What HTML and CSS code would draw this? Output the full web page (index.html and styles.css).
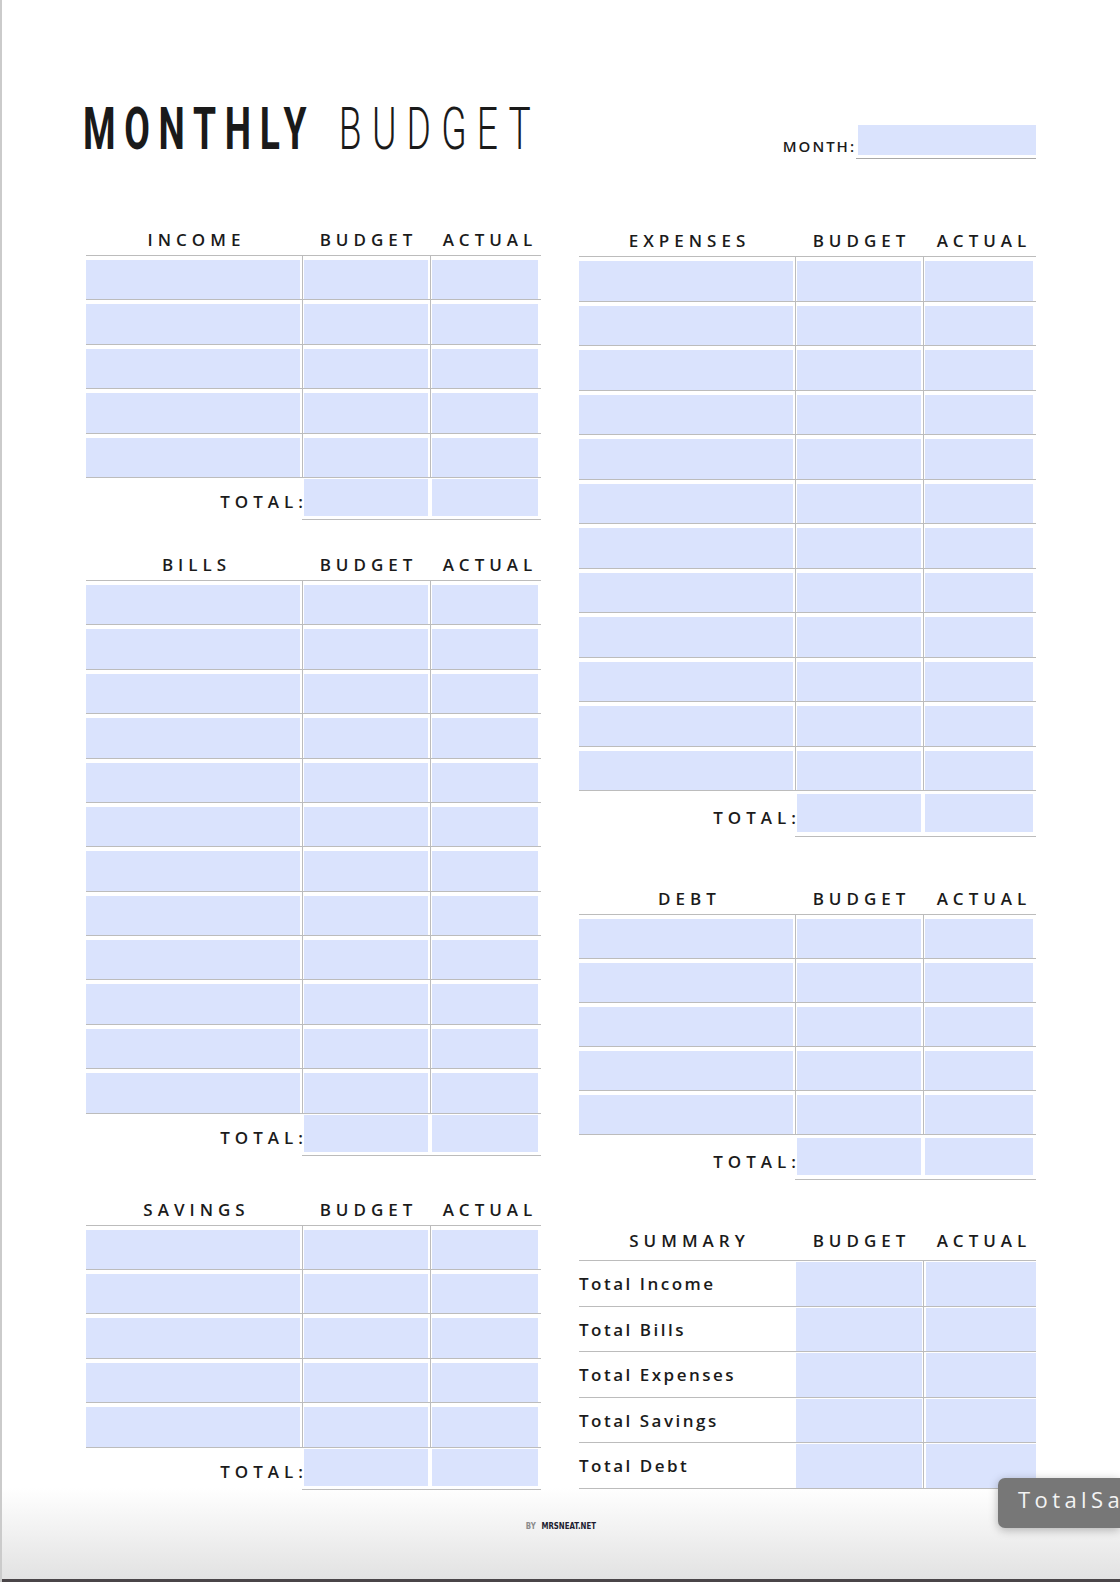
FILE: index.html
```html
<!DOCTYPE html>
<html lang="en">
<head>
<meta charset="utf-8">
<title>Monthly Budget</title>
<link rel="stylesheet" href="styles.css">
</head>
<body>
<div class="page">
  <header class="top">
    <h1 class="title"><span class="t-bold">MONTHLY</span> <span class="t-light">BUDGET</span></h1>
    <div class="month">
      <span class="month-label">MONTH:</span>
      <span class="month-field"><span class="month-fill"></span></span>
    </div>
  </header>

  <div class="columns">
    <div class="col col-left">
      <section class="sec">
        <div class="sec-head"><span>INCOME</span><span>BUDGET</span><span class="act">ACTUAL</span></div>
        <div class="row"><div class="c"><div class="fill"></div></div><div class="c"><div class="fill"></div></div><div class="c"><div class="fill"></div></div></div>
        <div class="row"><div class="c"><div class="fill"></div></div><div class="c"><div class="fill"></div></div><div class="c"><div class="fill"></div></div></div>
        <div class="row"><div class="c"><div class="fill"></div></div><div class="c"><div class="fill"></div></div><div class="c"><div class="fill"></div></div></div>
        <div class="row"><div class="c"><div class="fill"></div></div><div class="c"><div class="fill"></div></div><div class="c"><div class="fill"></div></div></div>
        <div class="row"><div class="c"><div class="fill"></div></div><div class="c"><div class="fill"></div></div><div class="c"><div class="fill"></div></div></div>
        <div class="total"><div class="lab"><span>TOTAL:</span></div><div class="tc"><div class="fill"></div></div><div class="tc"><div class="fill"></div></div></div>
      </section>

      <section class="sec sec-bills">
        <div class="sec-head"><span>BILLS</span><span>BUDGET</span><span class="act">ACTUAL</span></div>
        <div class="row"><div class="c"><div class="fill"></div></div><div class="c"><div class="fill"></div></div><div class="c"><div class="fill"></div></div></div>
        <div class="row"><div class="c"><div class="fill"></div></div><div class="c"><div class="fill"></div></div><div class="c"><div class="fill"></div></div></div>
        <div class="row"><div class="c"><div class="fill"></div></div><div class="c"><div class="fill"></div></div><div class="c"><div class="fill"></div></div></div>
        <div class="row"><div class="c"><div class="fill"></div></div><div class="c"><div class="fill"></div></div><div class="c"><div class="fill"></div></div></div>
        <div class="row"><div class="c"><div class="fill"></div></div><div class="c"><div class="fill"></div></div><div class="c"><div class="fill"></div></div></div>
        <div class="row"><div class="c"><div class="fill"></div></div><div class="c"><div class="fill"></div></div><div class="c"><div class="fill"></div></div></div>
        <div class="row"><div class="c"><div class="fill"></div></div><div class="c"><div class="fill"></div></div><div class="c"><div class="fill"></div></div></div>
        <div class="row"><div class="c"><div class="fill"></div></div><div class="c"><div class="fill"></div></div><div class="c"><div class="fill"></div></div></div>
        <div class="row"><div class="c"><div class="fill"></div></div><div class="c"><div class="fill"></div></div><div class="c"><div class="fill"></div></div></div>
        <div class="row"><div class="c"><div class="fill"></div></div><div class="c"><div class="fill"></div></div><div class="c"><div class="fill"></div></div></div>
        <div class="row"><div class="c"><div class="fill"></div></div><div class="c"><div class="fill"></div></div><div class="c"><div class="fill"></div></div></div>
        <div class="row"><div class="c"><div class="fill"></div></div><div class="c"><div class="fill"></div></div><div class="c"><div class="fill"></div></div></div>
        <div class="total"><div class="lab"><span>TOTAL:</span></div><div class="tc"><div class="fill"></div></div><div class="tc"><div class="fill"></div></div></div>
      </section>

      <section class="sec sec-savings">
        <div class="sec-head"><span>SAVINGS</span><span>BUDGET</span><span class="act">ACTUAL</span></div>
        <div class="row"><div class="c"><div class="fill"></div></div><div class="c"><div class="fill"></div></div><div class="c"><div class="fill"></div></div></div>
        <div class="row"><div class="c"><div class="fill"></div></div><div class="c"><div class="fill"></div></div><div class="c"><div class="fill"></div></div></div>
        <div class="row"><div class="c"><div class="fill"></div></div><div class="c"><div class="fill"></div></div><div class="c"><div class="fill"></div></div></div>
        <div class="row"><div class="c"><div class="fill"></div></div><div class="c"><div class="fill"></div></div><div class="c"><div class="fill"></div></div></div>
        <div class="row"><div class="c"><div class="fill"></div></div><div class="c"><div class="fill"></div></div><div class="c"><div class="fill"></div></div></div>
        <div class="total"><div class="lab"><span>TOTAL:</span></div><div class="tc"><div class="fill"></div></div><div class="tc"><div class="fill"></div></div></div>
      </section>
    </div>

    <div class="col col-right">
      <section class="sec sec-expenses">
        <div class="sec-head"><span>EXPENSES</span><span>BUDGET</span><span class="act">ACTUAL</span></div>
        <div class="row"><div class="c"><div class="fill"></div></div><div class="c"><div class="fill"></div></div><div class="c"><div class="fill"></div></div></div>
        <div class="row"><div class="c"><div class="fill"></div></div><div class="c"><div class="fill"></div></div><div class="c"><div class="fill"></div></div></div>
        <div class="row"><div class="c"><div class="fill"></div></div><div class="c"><div class="fill"></div></div><div class="c"><div class="fill"></div></div></div>
        <div class="row"><div class="c"><div class="fill"></div></div><div class="c"><div class="fill"></div></div><div class="c"><div class="fill"></div></div></div>
        <div class="row"><div class="c"><div class="fill"></div></div><div class="c"><div class="fill"></div></div><div class="c"><div class="fill"></div></div></div>
        <div class="row"><div class="c"><div class="fill"></div></div><div class="c"><div class="fill"></div></div><div class="c"><div class="fill"></div></div></div>
        <div class="row"><div class="c"><div class="fill"></div></div><div class="c"><div class="fill"></div></div><div class="c"><div class="fill"></div></div></div>
        <div class="row"><div class="c"><div class="fill"></div></div><div class="c"><div class="fill"></div></div><div class="c"><div class="fill"></div></div></div>
        <div class="row"><div class="c"><div class="fill"></div></div><div class="c"><div class="fill"></div></div><div class="c"><div class="fill"></div></div></div>
        <div class="row"><div class="c"><div class="fill"></div></div><div class="c"><div class="fill"></div></div><div class="c"><div class="fill"></div></div></div>
        <div class="row"><div class="c"><div class="fill"></div></div><div class="c"><div class="fill"></div></div><div class="c"><div class="fill"></div></div></div>
        <div class="row"><div class="c"><div class="fill"></div></div><div class="c"><div class="fill"></div></div><div class="c"><div class="fill"></div></div></div>
        <div class="total tall"><div class="lab"><span>TOTAL:</span></div><div class="tc"><div class="fill"></div></div><div class="tc"><div class="fill"></div></div></div>
      </section>

      <section class="sec sec-debt">
        <div class="sec-head"><span>DEBT</span><span>BUDGET</span><span class="act">ACTUAL</span></div>
        <div class="row"><div class="c"><div class="fill"></div></div><div class="c"><div class="fill"></div></div><div class="c"><div class="fill"></div></div></div>
        <div class="row"><div class="c"><div class="fill"></div></div><div class="c"><div class="fill"></div></div><div class="c"><div class="fill"></div></div></div>
        <div class="row"><div class="c"><div class="fill"></div></div><div class="c"><div class="fill"></div></div><div class="c"><div class="fill"></div></div></div>
        <div class="row"><div class="c"><div class="fill"></div></div><div class="c"><div class="fill"></div></div><div class="c"><div class="fill"></div></div></div>
        <div class="row"><div class="c"><div class="fill"></div></div><div class="c"><div class="fill"></div></div><div class="c"><div class="fill"></div></div></div>
        <div class="total tall"><div class="lab"><span>TOTAL:</span></div><div class="tc"><div class="fill"></div></div><div class="tc"><div class="fill"></div></div></div>
      </section>

      <section class="sec sec-summary">
        <div class="sec-head"><span>SUMMARY</span><span>BUDGET</span><span class="act">ACTUAL</span></div>
        <div class="row srow"><div class="s-lab">Total Income</div><div class="c"><div class="fill"></div></div><div class="c"><div class="fill"></div></div></div>
        <div class="row srow"><div class="s-lab">Total Bills</div><div class="c"><div class="fill"></div></div><div class="c"><div class="fill"></div></div></div>
        <div class="row srow"><div class="s-lab">Total Expenses</div><div class="c"><div class="fill"></div></div><div class="c"><div class="fill"></div></div></div>
        <div class="row srow"><div class="s-lab">Total Savings</div><div class="c"><div class="fill"></div></div><div class="c"><div class="fill"></div></div></div>
        <div class="row srow"><div class="s-lab">Total Debt</div><div class="c"><div class="fill"></div></div><div class="c"><div class="fill"></div></div></div>
      </section>
    </div>
  </div>

  <footer class="footer"><span class="foot-inner"><span class="by">BY</span> <span class="site">MRSNEAT.NET</span></span></footer>

  <div class="tooltip">TotalS<span class="tip-last">a</span></div>
</div>
</body>
</html>
```

FILE: styles.css
```css
* { box-sizing: border-box; margin: 0; padding: 0; }

:root {
  --fill: #dae3fd;
  --line: #bcbcbc;
  --ink: #1b1b1b;
}

body {
  margin: 0;
  background: #fff;
  font-family: "Open Sans", "Liberation Sans", sans-serif;
  color: var(--ink);
}

.page {
  position: relative;
  width: 1120px;
  height: 1582px;
  overflow: hidden;
  border-left: 2px solid #cbcbcb;
  padding: 99px 0 0 84px;
  background: linear-gradient(to bottom, #fff 0, #fff 1488px, #e2e2e2 1579px, #4a4548 1579px, #4a4548 100%);
}

/* ---------- title row ---------- */
.top {
  width: 950px;
  height: 60px;
  display: flex;
  justify-content: space-between;
  align-items: flex-end;
}

.title {
  flex: none;
  width: 450px;
  font-family: Roboto, "DejaVu Sans", sans-serif;
  font-size: 60px;
  line-height: 60px;
  font-weight: 400;
  letter-spacing: 14px;
  white-space: nowrap;
  color: #1a1a1a;
  transform: scaleX(0.62);
  transform-origin: left center;
  margin-left: -3px;
  align-self: flex-start;
}
.t-bold { font-weight: 700; }
.t-light { font-weight: 300; letter-spacing: 16.5px; margin-left: 9px; }

.month {
  flex: none;
  display: flex;
  align-items: flex-end;
}
.month-label {
  font-size: 15px;
  font-weight: 600;
  letter-spacing: 2px;
  line-height: 18px;
  padding-bottom: 4px;
}
.month-field {
  display: block;
  border-bottom: 1px solid #a8a8a8;
  padding: 0 0 3px 2px;
}
.month-fill {
  display: block;
  width: 178px;
  height: 30px;
  background: var(--fill);
}

/* ---------- columns ---------- */
.columns {
  display: grid;
  grid-template-columns: 455px 457px;
  column-gap: 38px;
  align-items: start;
  margin-top: 71px;
}
.col-left { --cols: 216px 128px 111px; }
.col-right { --cols: 216px 128px 113px; margin-top: 1px; }

.sec-bills { margin-top: 35px; }
.sec-savings { margin-top: 44px; }
.sec-debt { margin-top: 52px; }
.sec-summary { margin-top: 51px; }

.sec-head {
  display: grid;
  grid-template-columns: var(--cols);
  align-items: end;
  height: 26px;
  padding-bottom: 5px;
  border-bottom: 1px solid var(--line);
}
.sec-summary .sec-head { height: 30px; padding-bottom: 9px; }
.sec-head span {
  font-size: 17px;
  font-weight: 600;
  letter-spacing: 5px;
  line-height: 20px;
  text-align: center;
  padding-left: 5px;
  white-space: nowrap;
}
.sec-head .act { padding-left: 9px; }

.row {
  display: grid;
  grid-template-columns: var(--cols);
  height: 44.4px;
  border-bottom: 1px solid var(--line);
}
.sec-expenses .row { height: 44.5px; }
.sec-debt .row { height: 44px; }

.c {
  padding: 4px 2px 0 0;
}
.c + .c {
  border-left: 1px solid var(--line);
  padding-left: 1px;
}
.c:last-child { padding-right: 3px; }

.fill {
  height: 100%;
  background: var(--fill);
}

/* totals */
.total {
  display: grid;
  grid-template-columns: var(--cols);
  height: 42px;
}
.total .lab {
  text-align: right;
  padding-top: 14px;
  margin-right: -6px;
  font-size: 17px;
  font-weight: 600;
  letter-spacing: 5px;
  line-height: 20px;
  white-space: nowrap;
}
.total .tc {
  padding: 1px 2px 3px 2px;
  border-bottom: 1px solid var(--line);
}
.total .tc:last-child { padding-right: 3px; }

.total.tall { height: 46px; }
.total.tall .lab { padding-top: 17px; }
.total.tall .tc { padding: 3px 2px 4px 2px; }
.total.tall .tc:last-child { padding-right: 3px; }
.sec-debt .total.tall { height: 45px; }

/* summary */
.srow { height: 45.5px; }
.s-lab {
  display: flex;
  align-items: center;
  padding-top: 2px;
  font-size: 17px;
  font-weight: 600;
  letter-spacing: 2.5px;
  line-height: 20px;
  white-space: nowrap;
}
.srow .c { padding: 1px 1px 0 1px; }
.srow .c:last-child { padding: 1px 0 0 2px; }

/* ---------- footer ---------- */
.footer {
  width: 950px;
  margin-top: 31px;
  text-align: center;
  font-family: "DejaVu Sans Condensed", "DejaVu Sans", sans-serif;
  font-weight: 700;
  font-size: 9.5px;
  line-height: 10px;
}
.foot-inner {
  display: inline-block;
  transform: scaleX(0.82);
  transform-origin: center;
}
.by { color: #8c8c8c; margin-right: 4px; }
.site { color: #1c1c30; }

/* ---------- viewer tooltip (runs off the right edge) ---------- */
.tooltip {
  position: absolute;
  left: 996px;
  top: 1478px;
  width: 122px;
  height: 50px;
  padding-left: 20px;
  border-radius: 7px 0 0 7px;
  background: #777;
  box-shadow: 0 2px 10px rgba(0, 0, 0, 0.28);
  color: #f3f3f3;
  font-family: "Open Sans", "Liberation Sans", sans-serif;
  font-size: 22px;
  letter-spacing: 4.4px;
  line-height: 43px;
  white-space: nowrap;
  overflow: hidden;
}
.tip-last { letter-spacing: 0; }
```
